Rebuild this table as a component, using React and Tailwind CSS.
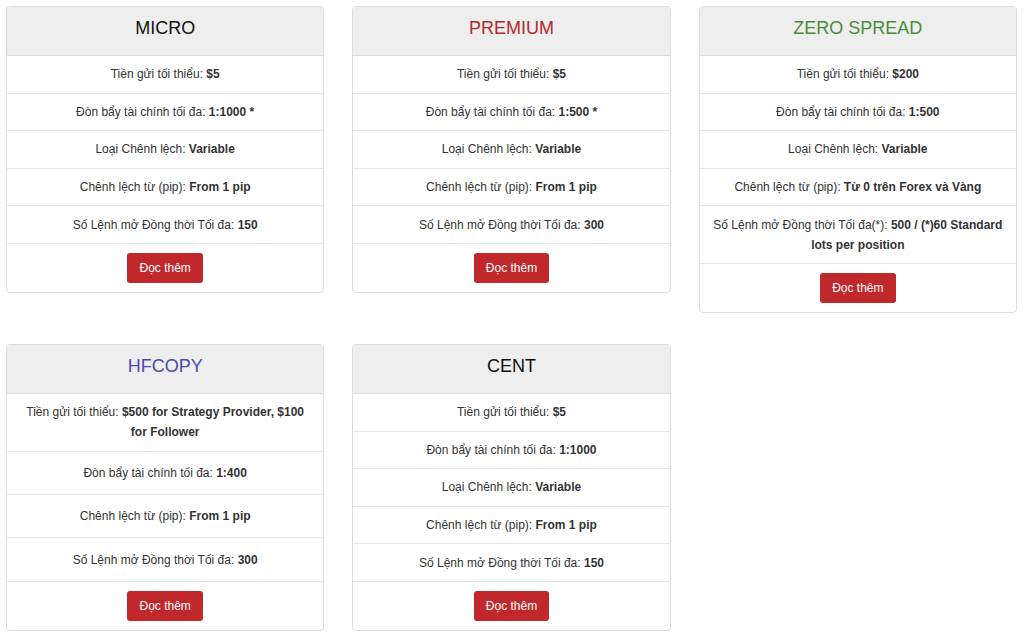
import React from "react";

const accounts = [
  {
    name: "MICRO",
    color: "text-[#111111]",
    rows: [
      ["Tiền gửi tối thiểu: ", "$5"],
      ["Đòn bẩy tài chính tối đa: ", "1:1000 *"],
      ["Loại Chênh lệch: ", "Variable"],
      ["Chênh lệch từ (pip): ", "From 1 pip"],
      ["Số Lệnh mở Đồng thời Tối đa: ", "150"],
    ],
  },
  {
    name: "PREMIUM",
    color: "text-[#b3282b]",
    rows: [
      ["Tiền gửi tối thiểu: ", "$5"],
      ["Đòn bẩy tài chính tối đa: ", "1:500 *"],
      ["Loại Chênh lệch: ", "Variable"],
      ["Chênh lệch từ (pip): ", "From 1 pip"],
      ["Số Lệnh mở Đồng thời Tối đa: ", "300"],
    ],
  },
  {
    name: "ZERO SPREAD",
    color: "text-[#4a8c3b]",
    rows: [
      ["Tiền gửi tối thiểu: ", "$200"],
      ["Đòn bẩy tài chính tối đa: ", "1:500"],
      ["Loại Chênh lệch: ", "Variable"],
      ["Chênh lệch từ (pip): ", "Từ 0 trên Forex và Vàng"],
      ["Số Lệnh mở Đồng thời Tối đa(*): ", "500 / (*)60 Standard lots per position"],
    ],
  },
  {
    name: "HFCOPY",
    color: "text-[#4c4ab0]",
    stretch: true,
    rows: [
      ["Tiền gửi tối thiểu: ", "$500 for Strategy Provider, $100 for Follower"],
      ["Đòn bẩy tài chính tối đa: ", "1:400"],
      ["Chênh lệch từ (pip): ", "From 1 pip"],
      ["Số Lệnh mở Đồng thời Tối đa: ", "300"],
    ],
  },
  {
    name: "CENT",
    color: "text-[#111111]",
    rows: [
      ["Tiền gửi tối thiểu: ", "$5"],
      ["Đòn bẩy tài chính tối đa: ", "1:1000"],
      ["Loại Chênh lệch: ", "Variable"],
      ["Chênh lệch từ (pip): ", "From 1 pip"],
      ["Số Lệnh mở Đồng thời Tối đa: ", "150"],
    ],
  },
];

const AccountCard = ({ acc }) => (
  <div
    className={`flex flex-col bg-white border border-[#dddddd] rounded-[4px] overflow-hidden ${
      acc.stretch ? "self-stretch" : ""
    }`}
  >
    <div className="bg-[#eeeeee] border-b border-[#dddddd] pt-[10px] pb-[16px] text-center">
      <h3 className={`text-[18px] leading-[22px] ${acc.color}`}>{acc.name}</h3>
    </div>
    <div className="flex flex-col flex-1">
      {acc.rows.map(([label, value], i) => (
        <div
          key={i}
          className="flex-1 flex items-center justify-center border-b border-[#e5e5e5] px-[10px] py-[8.3px] text-center text-[12px] leading-5 text-[#333333]"
        >
          <p>
            {label}
            <b className="font-bold">{value}</b>
          </p>
        </div>
      ))}
    </div>
    <div className="flex justify-center pt-[9px] pb-[9px]">
      <button className="bg-[#c0282b] text-white text-[12px] leading-[18px] px-3 py-[6px] rounded-[3px]">
        Đọc thêm
      </button>
    </div>
  </div>
);

export default function App() {
  return (
    <div
      className="min-h-screen bg-white pt-[6px] pl-[6px] pr-[7px]"
      style={{ fontFamily: '"Liberation Sans", Arial, sans-serif' }}
    >
      <div className="grid grid-cols-3 gap-x-7 gap-y-[31px] items-start">
        {accounts.map((acc) => (
          <AccountCard key={acc.name} acc={acc} />
        ))}
      </div>
    </div>
  );
}
